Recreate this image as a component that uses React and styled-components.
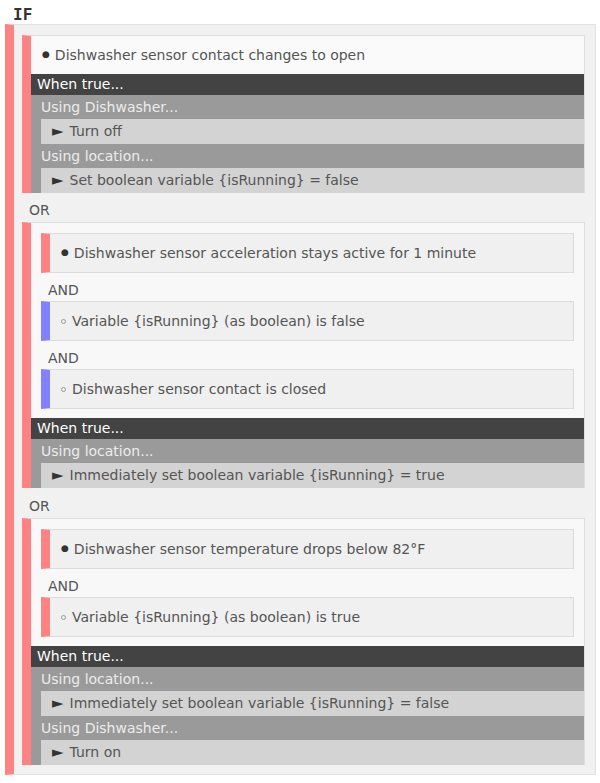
import React from 'react';
import styled, { createGlobalStyle } from 'styled-components';

const GlobalStyle = createGlobalStyle`
  body {
    margin: 0;
    background: #fff;
    font-family: "DejaVu Sans", Verdana, sans-serif;
  }
`;

const RED = '#ff8282';
const BLUE = '#8282ff';

const Page = styled.div`
  padding: 5px 4px 6px 5px;
`;

const Title = styled.div`
  font-family: "DejaVu Sans Mono", monospace;
  font-weight: bold;
  font-size: 16px;
  line-height: 19px;
  color: #333;
  padding-left: 8px;
`;

const Group = styled.div`
  background: #f1f1f1;
  border: 1px solid #e2e2e2;
  border-left: 9px solid ${RED};
  padding: 10px 10px 9px 8px;
`;

const Block = styled.div`
  background: #f8f8f8;
  border: 1px solid #dedede;
  border-left: 9px solid ${RED};
  border-bottom: none;
`;

const Conditions = styled.div`
  padding: ${(p) => (p.$nested ? '10px 10px 9px 10px' : '0')};
`;

const Leaf = styled.div`
  display: flex;
  align-items: center;
  height: 38px;
  padding-left: 11px;
  font-size: 14px;
  color: #555;
  background: ${(p) => (p.$flat ? '#fafafa' : '#f0f0f0')};
  border: ${(p) => (p.$flat ? 'none' : '1px solid #dcdcdc')};
  border-left: ${(p) => (p.$bar ? `9px solid ${p.$bar}` : 'none')};
`;

const Dot = styled.span`
  font-size: 9px;
  color: #333;
  margin-right: 5px;
  position: relative;
  top: -1px;
`;

const Ring = styled.span`
  width: 3px;
  height: 3px;
  border: 1px solid #999;
  border-radius: 50%;
  margin: 1px 6px 0 0;
  flex: none;
`;

const Joiner = styled.div`
  box-sizing: border-box;
  height: ${(p) => p.$h || 28}px;
  padding-top: 5px;
  display: flex;
  align-items: center;
  padding-left: 7px;
  font-size: 14px;
  color: #555;
`;

const WhenTrue = styled.div`
  height: 21px;
  line-height: 21px;
  background: #434343;
  color: #fff;
  font-size: 14px;
  padding-left: 6px;
`;

const Using = styled.div`
  background: #9a9a9a;
`;

const UsingLabel = styled.div`
  height: 24px;
  line-height: 24px;
  padding-left: 10px;
  font-size: 14px;
  color: #ececec;
`;

const Action = styled.div`
  margin-left: 10px;
  height: 25px;
  line-height: 25px;
  background: #d3d3d3;
  padding-left: 11px;
  font-size: 14px;
  color: #555;
`;

const Arrow = styled.span`
  color: #333;
  font-size: 15px;
  margin-right: 6px;
`;

const Cond = ({ bar, hollow, flat, children }) => (
  <Leaf $bar={bar} $flat={flat}>
    {hollow ? <Ring /> : <Dot>●</Dot>}
    {children}
  </Leaf>
);

const Actions = ({ groups }) => (
  <>
    <WhenTrue>When true...</WhenTrue>
    {groups.map((g, i) => (
      <Using key={i}>
        <UsingLabel>Using {g.device}...</UsingLabel>
        {g.actions.map((a, j) => (
          <Action key={j}>
            <Arrow>►</Arrow>
            {a}
          </Action>
        ))}
      </Using>
    ))}
  </>
);

export default function App() {
  return (
    <Page>
      <GlobalStyle />
      <Title>IF</Title>
      <Group>
        <Block>
          <Conditions>
            <Cond flat>Dishwasher sensor contact changes to open</Cond>
          </Conditions>
          <Actions
            groups={[
              { device: 'Dishwasher', actions: ['Turn off'] },
              { device: 'location', actions: ['Set boolean variable {isRunning} = false'] },
            ]}
          />
        </Block>
        <Joiner $h={29}>OR</Joiner>
        <Block>
          <Conditions $nested>
            <Cond bar={RED}>Dishwasher sensor acceleration stays active for 1 minute</Cond>
            <Joiner>AND</Joiner>
            <Cond bar={BLUE} hollow>Variable {'{isRunning}'} (as boolean) is false</Cond>
            <Joiner>AND</Joiner>
            <Cond bar={BLUE} hollow>Dishwasher sensor contact is closed</Cond>
          </Conditions>
          <Actions
            groups={[
              { device: 'location', actions: ['Immediately set boolean variable {isRunning} = true'] },
            ]}
          />
        </Block>
        <Joiner $h={30}>OR</Joiner>
        <Block>
          <Conditions $nested>
            <Cond bar={RED}>Dishwasher sensor temperature drops below 82°F</Cond>
            <Joiner>AND</Joiner>
            <Cond bar={RED} hollow>Variable {'{isRunning}'} (as boolean) is true</Cond>
          </Conditions>
          <Actions
            groups={[
              { device: 'location', actions: ['Immediately set boolean variable {isRunning} = false'] },
              { device: 'Dishwasher', actions: ['Turn on'] },
            ]}
          />
        </Block>
      </Group>
    </Page>
  );
}
